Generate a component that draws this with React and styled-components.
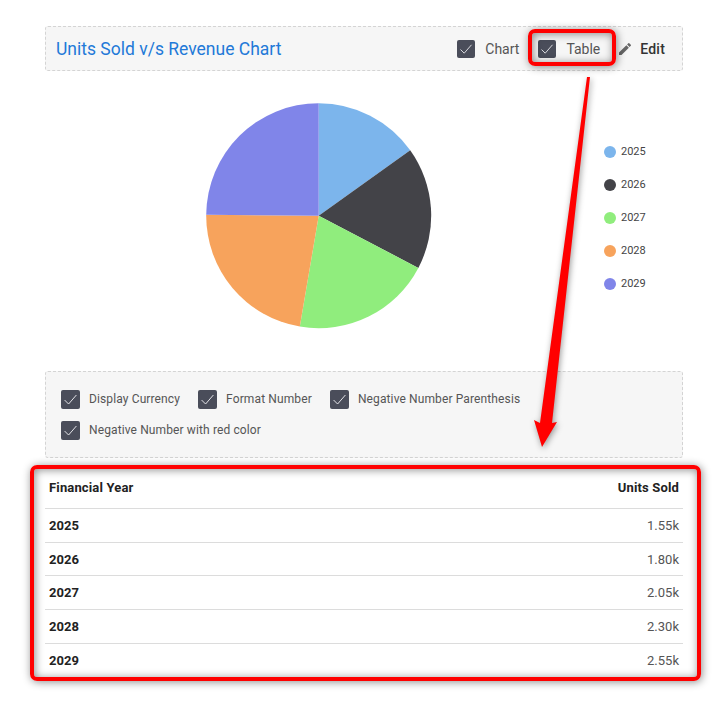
import React from 'react';
import styled, { createGlobalStyle } from 'styled-components';

const GlobalStyle = createGlobalStyle`
  html, body {
    margin: 0;
    padding: 0;
    background: #fff;
    font-family: Roboto, "Liberation Sans", sans-serif;
  }
`;

const Page = styled('div')`
  position: relative;
  width: 722px;
  height: 704px;
  padding: 26px 39px 0 45px;
  box-sizing: border-box;
  overflow: hidden;
`;

const Panel = styled('div')`
  background: #f6f6f6;
  border: 1px dashed #d4d4d4;
  border-radius: 3px;
  box-sizing: border-box;
`;

const Header = styled(Panel)`
  height: 45px;
  display: flex;
  align-items: center;
  padding: 0 17px 0 10px;
`;

const Title = styled('h2')`
  margin: 0;
  font-size: 17.5px;
  font-weight: 400;
  color: #2279d8;
`;

const HeaderActions = styled('div')`
  margin-left: auto;
  display: flex;
  align-items: center;
`;

const CheckBox = styled('span')`
  flex: none;
  width: ${(props) => props.size}px;
  height: ${(props) => props.size}px;
  border-radius: 2px;
  background: #4a4d5a;
  display: flex;
  align-items: center;
  justify-content: center;
`;

const Toggle = styled('label')`
  display: flex;
  align-items: center;
  gap: 10px;
  margin-right: ${(props) => props.after}px;
  font-size: 14px;
  color: #555;
`;

const EditButton = styled('div')`
  display: flex;
  align-items: center;
  gap: 7px;
  font-size: 14px;
  font-weight: 500;
  letter-spacing: 0.2px;
  color: #333;
`;

const ChartRow = styled('div')`
  height: 300px;
  display: flex;
`;

const PieWrap = styled('div')`
  margin: 32px 0 0 161px;
  width: 226px;
  height: 226px;
`;

const Legend = styled('ul')`
  list-style: none;
  margin: 72px 0 0 172px;
  padding: 0;
  display: flex;
  flex-direction: column;
  gap: 16px;
`;

const LegendItem = styled('li')`
  height: 17px;
  display: flex;
  align-items: center;
  gap: 5px;
  font-size: 11px;
  color: #444;
`;

const Dot = styled('span')`
  width: 12px;
  height: 12px;
  border-radius: 50%;
  background: ${(props) => props.color};
`;

const Options = styled(Panel)`
  height: 87px;
  padding: 17px 15px;
  display: flex;
  flex-wrap: wrap;
  align-content: flex-start;
  row-gap: 11px;
`;

const Option = styled('label')`
  display: flex;
  align-items: center;
  gap: 9px;
  height: 20px;
  margin-right: 18px;
  font-size: 12px;
  letter-spacing: 0.12px;
  color: #555;
`;

const Table = styled('div')`
  margin-top: 8px;
  font-size: 13px;
  color: #222;
`;

const HeadRow = styled('div')`
  height: 42px;
  padding: 0 4px;
  display: flex;
  align-items: center;
  justify-content: space-between;
  font-weight: 700;
  letter-spacing: 0.15px;
`;

const Row = styled('div')`
  height: 33.7px;
  box-sizing: border-box;
  padding: 0 4px;
  display: flex;
  align-items: center;
  justify-content: space-between;
  border-top: 1px solid #dcdcdc;
`;

const Year = styled('span')`
  font-weight: 700;
`;

const Value = styled('span')`
  color: #555;
`;

const Highlight = styled('div')`
  position: absolute;
  left: ${(props) => props.x}px;
  top: ${(props) => props.y}px;
  width: ${(props) => props.w}px;
  height: ${(props) => props.h}px;
  box-sizing: border-box;
  border: 4px solid #f00;
  border-radius: 7px;
  box-shadow: 1px 1px 8px rgba(0, 0, 0, 0.45), inset 1px 1px 8px rgba(0, 0, 0, 0.45);
  pointer-events: none;
`;

const ArrowSvg = styled('svg')`
  position: absolute;
  left: 0;
  top: 0;
  filter: drop-shadow(1px 2px 3px rgba(0, 0, 0, 0.4));
`;

const slices = [
  { year: '2025', value: 1.55, color: '#7cb5ec' },
  { year: '2026', value: 1.8, color: '#434348' },
  { year: '2027', value: 2.05, color: '#90ed7d' },
  { year: '2028', value: 2.3, color: '#f7a35c' },
  { year: '2029', value: 2.55, color: '#8085e9' },
];

const Check = ({ size }) => (
  <svg width={size - 4} height={size - 4} viewBox="0 0 14 14" fill="none">
    <path d="M1.5 7.5 L5.2 11.2 L12.5 2.8" stroke="#e8e8ec" strokeWidth="0.9" />
  </svg>
);

const Box = ({ size = 18 }) => (
  <CheckBox size={size}>
    <Check size={size} />
  </CheckBox>
);

const Pencil = () => (
  <svg width="16" height="16" viewBox="0 0 24 24" fill="#666">
    <path d="M3 17.25V21h3.75L17.81 9.94l-3.75-3.75L3 17.25zM20.71 7.04a1 1 0 0 0 0-1.41l-2.34-2.34a1 1 0 0 0-1.41 0l-1.83 1.83 3.75 3.75 1.83-1.83z" />
  </svg>
);

const Pie = () => {
  const total = slices.reduce((sum, s) => sum + s.value, 0);
  const c = 112.7;
  const r = 112.5;
  let angle = 0;
  return (
    <svg width="226" height="226" viewBox="0 0 226 226">
      {slices.map((s) => {
        const start = angle;
        angle += (s.value / total) * Math.PI * 2;
        const x1 = c + r * Math.sin(start);
        const y1 = c - r * Math.cos(start);
        const x2 = c + r * Math.sin(angle);
        const y2 = c - r * Math.cos(angle);
        return (
          <path
            key={s.year}
            d={`M${c} ${c} L${x1} ${y1} A${r} ${r} 0 0 1 ${x2} ${y2} Z`}
            fill={s.color}
          />
        );
      })}
    </svg>
  );
};

const App = () => (
  <Page>
    <GlobalStyle />
    <Header>
      <Title>Units Sold v/s Revenue Chart</Title>
      <HeaderActions>
        <Toggle after={19}><Box />Chart</Toggle>
        <Toggle after={17}><Box />Table</Toggle>
        <EditButton><Pencil />Edit</EditButton>
      </HeaderActions>
    </Header>
    <ChartRow>
      <PieWrap><Pie /></PieWrap>
      <Legend>
        {slices.map((s) => (
          <LegendItem key={s.year}><Dot color={s.color} />{s.year}</LegendItem>
        ))}
      </Legend>
    </ChartRow>
    <Options>
      <Option><Box size={19} />Display Currency</Option>
      <Option><Box size={19} />Format Number</Option>
      <Option><Box size={19} />Negative Number Parenthesis</Option>
      <Option><Box size={19} />Negative Number with red color</Option>
    </Options>
    <Table>
      <HeadRow>
        <span>Financial Year</span>
        <span>Units Sold</span>
      </HeadRow>
      {slices.map((s) => (
        <Row key={s.year}>
          <Year>{s.year}</Year>
          <Value>{s.value.toFixed(2)}k</Value>
        </Row>
      ))}
    </Table>
    <Highlight x={528} y={29} w={88} h={37} />
    <Highlight x={30} y={465} w={671} h={216} />
    <ArrowSvg width="722" height="704" viewBox="0 0 722 704">
      <polygon points="587,77 590,77 552,423 557,422 542,447 534,420 540,423" fill="#f00" />
    </ArrowSvg>
  </Page>
);

export default App;
